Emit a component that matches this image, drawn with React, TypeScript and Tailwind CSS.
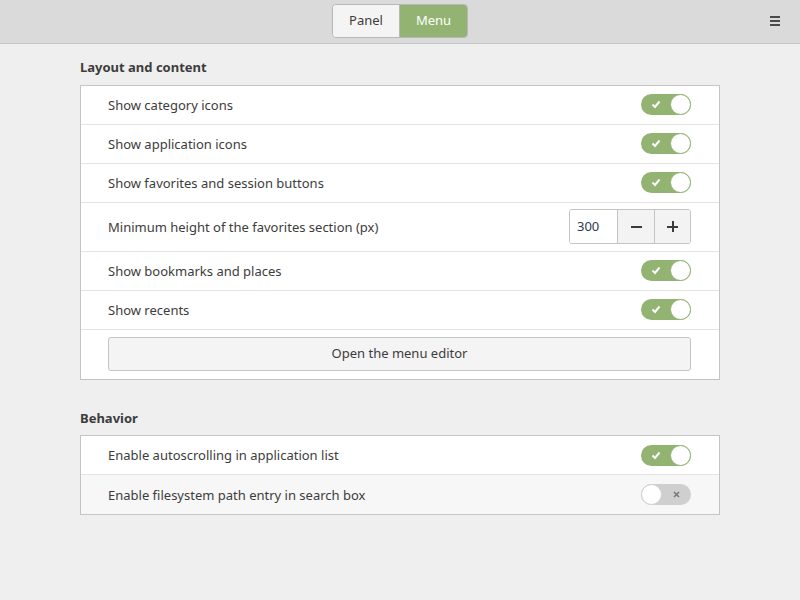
import React, { useState } from 'react';

const font = { fontFamily: '"Noto Sans", "Open Sans", sans-serif' };

function Toggle({ on, onChange }: { on: boolean; onChange: () => void }) {
  return (
    <button
      onClick={onChange}
      className={`relative w-[50px] h-[21px] rounded-full ${on ? 'bg-[#92b372]' : 'bg-[#cfcfcf]'}`}
    >
      {on ? (
        <svg className="absolute left-[10px] top-[6px]" width="10" height="9" viewBox="0 0 10 9">
          <path d="M1.5 4.5 L4 7 L8.5 1.5" fill="none" stroke="#fff" strokeWidth="2" />
        </svg>
      ) : (
        <svg className="absolute right-[11px] top-[7px]" width="7" height="7" viewBox="0 0 7 7">
          <path d="M1 1 L6 6 M6 1 L1 6" stroke="#777" strokeWidth="1.6" />
        </svg>
      )}
      <span
        className={`absolute top-[0px] w-[21px] h-[21px] rounded-full bg-white border ${
          on ? 'right-0 border-[#92b372]' : 'left-0 border-[#cfcfcf]'
        }`}
      />
    </button>
  );
}

function Row({ label, children, last, shaded }: { label: string; children: React.ReactNode; last?: boolean; shaded?: boolean }) {
  return (
    <div
      className={`flex items-center justify-between h-[39px] pl-[27px] pr-[28px] ${shaded ? 'bg-[#f7f7f7]' : 'bg-white'} ${
        last ? '' : 'border-b border-[#e4e4e4]'
      }`}
    >
      <span className="text-[13px] text-[#3c3c3c] pt-[2px]">{label}</span>
      {children}
    </div>
  );
}

export default function App() {
  const [tab, setTab] = useState<'panel' | 'menu'>('menu');
  const [opts, setOpts] = useState({
    category: true,
    appIcons: true,
    favorites: true,
    bookmarks: true,
    recents: true,
    autoscroll: true,
    pathEntry: false,
  });
  const [height, setHeight] = useState(300);
  const flip = (k: keyof typeof opts) => setOpts({ ...opts, [k]: !opts[k] });

  return (
    <div className="w-[800px] h-[600px] bg-[#efefef] text-[#3c3c3c]" style={font}>
      {/* Barra superior */}
      <div className="relative h-[44px] bg-[#dadada] border-b border-[#c6c6c6] flex items-center justify-center">
        <div className="flex h-[34px] mt-[-1px] rounded-[4px] border border-[#b8b8b8] overflow-hidden text-[13px]">
          <button
            onClick={() => setTab('panel')}
            className={`w-[66px] ${tab === 'panel' ? 'bg-[#92b372] text-white' : 'bg-[#f4f4f4] text-[#3c3c3c]'}`}
          >
            Panel
          </button>
          <button
            onClick={() => setTab('menu')}
            className={`w-[68px] border-l border-[#b8b8b8] ${tab === 'menu' ? 'bg-[#92b372] text-white' : 'bg-[#f4f4f4] text-[#3c3c3c]'}`}
          >
            Menu
          </button>
        </div>
        <div className="absolute right-[20px] top-[16px] flex flex-col gap-[2px]">
          <span className="block w-[10px] h-[2px] bg-[#4a4a4a]" />
          <span className="block w-[10px] h-[2px] bg-[#4a4a4a]" />
          <span className="block w-[10px] h-[2px] bg-[#4a4a4a]" />
        </div>
      </div>

      <div className="px-[80px]">
        <h2 className="text-[13px] font-bold text-[#3c3c3c] mt-[14px] mb-[7px]">Layout and content</h2>
        <div className="border border-[#c4c4c4] bg-white">
          <Row label="Show category icons">
            <Toggle on={opts.category} onChange={() => flip('category')} />
          </Row>
          <Row label="Show application icons">
            <Toggle on={opts.appIcons} onChange={() => flip('appIcons')} />
          </Row>
          <Row label="Show favorites and session buttons">
            <Toggle on={opts.favorites} onChange={() => flip('favorites')} />
          </Row>
          <div className="flex items-center justify-between h-[49px] pl-[27px] pr-[28px] border-b border-[#e4e4e4]">
            <span className="text-[13px] pt-[2px]">Minimum height of the favorites section (px)</span>
            <div className="flex h-[35px] border border-[#c4c4c4] rounded-[3px] overflow-hidden text-[13px]">
              <div className="w-[47px] bg-white flex items-center pl-[7px] pt-[1px] text-[#2d3a52]">{height}</div>
              <button
                onClick={() => setHeight(height - 1)}
                className="w-[37px] bg-[#f3f3f3] border-l border-[#c4c4c4] flex items-center justify-center"
              >
                <span className="block w-[11px] h-[2px] bg-[#3c3c3c]" />
              </button>
              <button
                onClick={() => setHeight(height + 1)}
                className="w-[36px] bg-[#f3f3f3] border-l border-[#c4c4c4] flex items-center justify-center relative"
              >
                <span className="block w-[11px] h-[2px] bg-[#3c3c3c]" />
                <span className="absolute block w-[2px] h-[11px] bg-[#3c3c3c]" />
              </button>
            </div>
          </div>
          <Row label="Show bookmarks and places">
            <Toggle on={opts.bookmarks} onChange={() => flip('bookmarks')} />
          </Row>
          <Row label="Show recents">
            <Toggle on={opts.recents} onChange={() => flip('recents')} />
          </Row>
          <div className="h-[49px] pl-[27px] pr-[28px] pt-[7px]">
            <button className="w-full h-[34px] bg-[#f4f4f4] border border-[#c4c4c4] rounded-[3px] text-[13px] text-[#3c3c3c]">
              Open the menu editor
            </button>
          </div>
        </div>

        <h2 className="text-[13px] font-bold text-[#3c3c3c] mt-[29px] mb-[7px]">Behavior</h2>
        <div className="border border-[#c4c4c4] bg-white">
          <Row label="Enable autoscrolling in application list">
            <Toggle on={opts.autoscroll} onChange={() => flip('autoscroll')} />
          </Row>
          <Row label="Enable filesystem path entry in search box" last shaded>
            <Toggle on={opts.pathEntry} onChange={() => flip('pathEntry')} />
          </Row>
        </div>
      </div>
    </div>
  );
}
